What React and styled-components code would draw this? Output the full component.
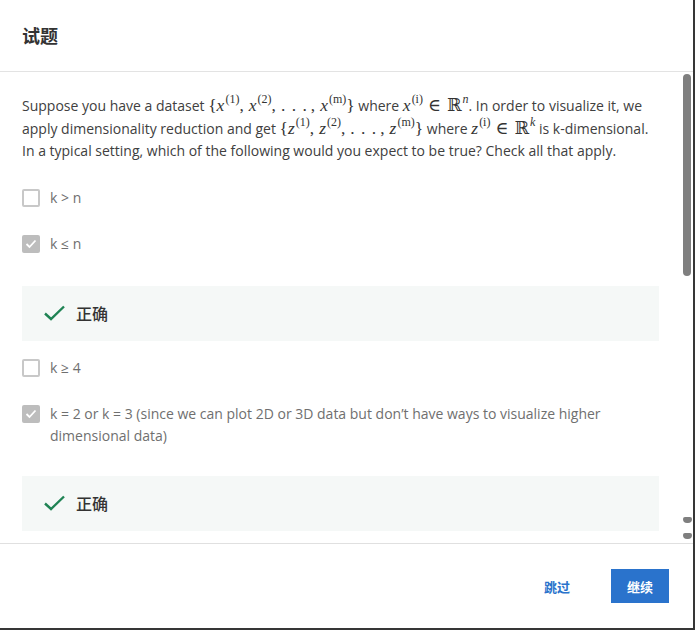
import styled, { createGlobalStyle } from "styled-components";

const GlobalStyle = createGlobalStyle`
  html, body {
    margin: 0;
    padding: 0;
    background: #ffffff;
  }
  body {
    font-family: "Open Sans", "Noto Sans CJK SC", sans-serif;
  }
`;

const Dialog = styled.div`
  width: 693px;
  height: 628px;
  border-right: 2px solid #363636;
  border-bottom: 2px solid #363636;
  background: #fff;
  display: flex;
  flex-direction: column;
  overflow: hidden;
`;

const Header = styled.div`
  height: 71px;
  flex: none;
  display: flex;
  align-items: center;
  padding-left: 22px;
  border-bottom: 1px solid #e3e3e3;
`;

const Title = styled.h2`
  margin: 0 0 2px;
  font-family: "Noto Sans CJK SC", sans-serif;
  font-size: 18px;
  font-weight: 700;
  color: #333;
`;

const Body = styled.div`
  position: relative;
  flex: 1;
  overflow: hidden;
`;

const Content = styled.div`
  padding: 23px 34px 0 22px;
`;

const Question = styled.p`
  margin: 0;
  font-size: 14px;
  line-height: 22.5px;
  color: #404040;
`;

const Math = styled.span`
  font-family: "Liberation Serif", "DejaVu Serif", serif;
  font-size: 17.5px;
  line-height: 1;
  color: #333;
  white-space: nowrap;
`;

const Mi = styled.i`
  font-style: italic;
`;

const Sup = styled.sup`
  font-style: normal;
  font-size: 12px;
  vertical-align: baseline;
  position: relative;
  top: -8px;
  line-height: 0;
  margin-left: 1px;
`;

const Sep = styled.span`
  margin-right: ${(p) => p.$gap}px;
  margin-left: ${(p) => p.$pre || 0}px;
  letter-spacing: ${(p) => p.$spread || 0}px;
`;

const Options = styled.div`
  display: flex;
  flex-direction: column;
  margin-top: ${(p) => p.$top}px;
`;

const Option = styled.label`
  display: flex;
  align-items: flex-start;
  gap: 10px;
  padding: 12px 0;
  font-size: 14px;
  line-height: 22px;
  color: #6f6f6f;
`;

const Box = styled.span`
  flex: none;
  width: 18px;
  height: 18px;
  margin-top: 2px;
  box-sizing: border-box;
  border-radius: 2px;
  border: 2px solid ${(p) => (p.$checked ? "#bdbdbd" : "#c8c8c8")};
  background: ${(p) => (p.$checked ? "#bdbdbd" : "#fff")};
  display: flex;
  align-items: center;
  justify-content: center;
`;

const Feedback = styled.div`
  height: 55px;
  margin: ${(p) => p.$top}px 0 4px;
  background: #f5f8f7;
  display: flex;
  align-items: center;
  gap: 11px;
  padding-left: 22px;
  font-family: "Noto Sans CJK SC", sans-serif;
  font-size: 16px;
  font-weight: 500;
  color: #333;
`;

const Track = styled.div`
  position: absolute;
  top: 2px;
  right: 2px;
  width: 8px;
  height: 202px;
  border-radius: 4px;
  background: #7f7f7f;
`;

const Arrow = styled.div`
  position: absolute;
  right: 1px;
  top: ${(p) => p.$top}px;
  width: 9px;
  height: 6px;
  background: #7f7f7f;
  border-radius: 2px 2px 4px 4px;
`;

const Footer = styled.div`
  height: 84px;
  flex: none;
  border-top: 1px solid #e0e0e0;
  display: flex;
  align-items: center;
  justify-content: flex-end;
  gap: 25px;
  padding-right: 24px;
`;

const Button = styled.button`
  height: 34px;
  padding: 0 16px;
  border: none;
  border-radius: 0;
  font-family: "Noto Sans CJK SC", sans-serif;
  font-size: 13px;
  font-weight: 700;
  cursor: pointer;
  color: ${(p) => (p.$primary ? "#fff" : "#2a73cc")};
  background: ${(p) => (p.$primary ? "#2a73cc" : "transparent")};
`;

function Tick() {
  return (
    <svg width="12" height="10" viewBox="0 0 12 10">
      <path d="M1.5 5 L4.5 8 L10.5 1.5" fill="none" stroke="#fff" strokeWidth="1.8" />
    </svg>
  );
}

function Correct() {
  return (
    <svg width="21" height="16" viewBox="0 0 21 16">
      <path d="M1 8.5 L7 14 L20 1.5" fill="none" stroke="#1f8354" strokeWidth="2.4" />
    </svg>
  );
}

function Check({ checked, children }) {
  return (
    <Option>
      <Box $checked={checked}>{checked && <Tick />}</Box>
      <span>{children}</span>
    </Option>
  );
}

function Set({ v }) {
  return (
    <Math>
      {"{"}
      <Mi>{v}</Mi>
      <Sup>(1)</Sup>
      <Sep $gap={5}>,</Sep>
      <Mi>{v}</Mi>
      <Sup>(2)</Sup>
      <Sep $gap={5}>,</Sep>
      <Sep $gap={3} $spread={1}>. . .</Sep>
      <Sep $gap={5}>,</Sep>
      <Mi>{v}</Mi>
      <Sup>(m)</Sup>
      {"}"}
    </Math>
  );
}

function Member({ v, dim }) {
  return (
    <Math>
      <Mi>{v}</Mi>
      <Sup>(i)</Sup>
      <Sep $gap={6} $pre={5}>∈</Sep>ℝ
      <Sup>
        <Mi>{dim}</Mi>
      </Sup>
    </Math>
  );
}

export default function App() {
  return (
    <>
      <GlobalStyle />
      <Dialog>
        <Header>
          <Title>试题</Title>
        </Header>
        <Body>
          <Content>
            <Question>
              Suppose you have a dataset <Set v="x" /> where <Member v="x" dim="n" />. In order
              to visualize it, we apply dimensionality reduction and get <Set v="z" /> where{" "}
              <Member v="z" dim="k" /> is k-dimensional. In a typical setting, which of the
              following would you expect to be true? Check all that apply.
            </Question>
            <Options $top={12}>
              <Check>k &gt; n</Check>
              <Check checked>k ≤ n</Check>
            </Options>
            <Feedback $top={19}>
              <Correct />
              正确
            </Feedback>
            <Options $top={0}>
              <Check>k ≥ 4</Check>
              <Check checked>
                k = 2 or k = 3 (since we can plot 2D or 3D data but don’t have ways to visualize
                higher dimensional data)
              </Check>
            </Options>
            <Feedback $top={17}>
              <Correct />
              正确
            </Feedback>
          </Content>
          <Track />
          <Arrow $top={445} />
          <Arrow $top={461} />
        </Body>
        <Footer>
          <Button>跳过</Button>
          <Button $primary>继续</Button>
        </Footer>
      </Dialog>
    </>
  );
}
